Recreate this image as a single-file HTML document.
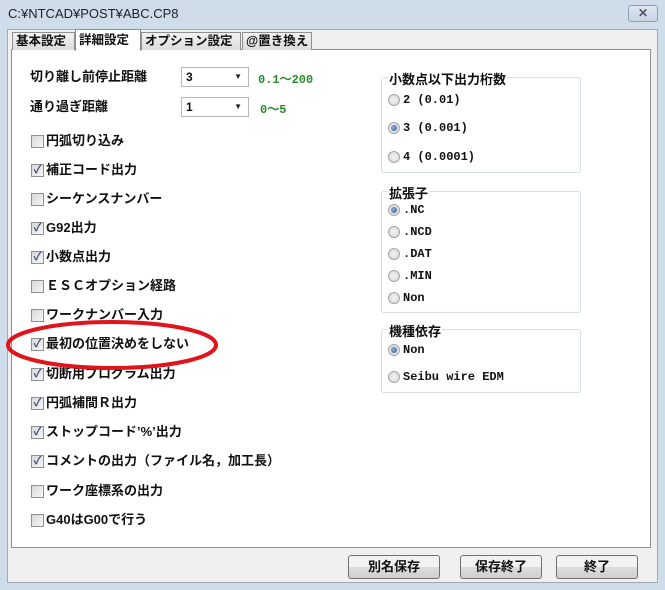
<!DOCTYPE html><html><head><meta charset="utf-8"><style>
*{margin:0;padding:0;box-sizing:border-box}
body{width:665px;height:590px;background:#cfdcea;font-family:"Liberation Sans","Noto Sans CJK JP",sans-serif;position:relative;overflow:hidden;font-size:13px;font-weight:bold;color:#111}
.a{position:absolute}
.title{left:8px;top:6px;font-weight:normal;font-size:13px;color:#222}
.client{left:7px;top:29px;width:651px;height:554px;background:#f0f0f0;border:1px solid #a0aab5}
.pane{left:11px;top:49px;width:640px;height:499px;background:#fff;border:1px solid #8e8f8f}
.tab{top:32px;height:18px;border:1px solid #8e8f8f;border-bottom:none;background:linear-gradient(#f2f2f2,#dcdcdc);font-size:12.5px;line-height:16px;padding:0 3px;white-space:nowrap;overflow:hidden}
.cb{width:13px;height:13px;border:1px solid #8e8f8f;background:linear-gradient(135deg,#d8d8d8,#f6f6f6);font-size:11px;line-height:11px;text-align:center;color:#3a4a78}
.lbl{white-space:nowrap;font-size:13px;line-height:16px}
.m{font-family:"Liberation Mono","Noto Sans CJK JP",monospace;font-size:12px}
.grp{border:1px solid #d5dfe5;border-radius:3px}
.gt{background:#fff;padding:0 1px;font-size:13px}
.rb{width:12px;height:12px;border-radius:50%;border:1px solid #a6a6a6;background:radial-gradient(#f4f4f4,#d4d4d4)}
.rb.on::after{content:"";position:absolute;left:2px;top:2px;width:6px;height:6px;border-radius:50%;background:radial-gradient(circle at 40% 40%,#9ad,#1d5a9a)}
.sel{width:68px;height:20px;border:1px solid #b8b8b8;background:#fff;font-size:12px;padding:2px 4px}
.sel::after{content:"▼";position:absolute;right:6px;top:4px;font-size:8px;color:#222}
.green{color:#2a8a2a;font-family:"Liberation Mono",monospace;font-size:12px}
.btn{top:555px;height:24px;border:1px solid #707070;border-radius:3px;background:linear-gradient(#f2f2f2 50%,#dddddd 51%,#cfcfcf);text-align:center;line-height:22px;font-size:13px}
</style></head><body>
<div class="a title">C:¥NTCAD¥POST¥ABC.CP8</div>
<div class="a" style="left:628px;top:5px;width:30px;height:17px;border:1px solid #8ea0b6;border-radius:3px;background:linear-gradient(#dde6f0,#c6d4e4);text-align:center;font-size:12px;line-height:15px;color:#556">✕</div>
<div class="a client"></div>
<div class="a pane"></div>
<div class="a tab" style="left:12px;width:63px">基本設定</div>
<div class="a tab" style="left:75px;top:29px;height:22px;width:66px;background:#fff;line-height:20px">詳細設定</div>
<div class="a tab" style="left:141px;width:100px">オプション設定</div>
<div class="a tab" style="left:242px;width:70px">@置き換え</div>

<div class="a lbl" style="left:30px;top:69px">切り離し前停止距離</div>
<div class="a sel" style="left:181px;top:67px">3</div>
<div class="a green" style="left:258px;top:70px">0.1～200</div>
<div class="a lbl" style="left:30px;top:99px">通り過ぎ距離</div>
<div class="a sel" style="left:181px;top:97px">1</div>
<div class="a green" style="left:260px;top:100px">0～5</div>

<div class="a cb" style="left:31px;top:135px"></div><div class="a lbl" style="left:46px;top:133px">円弧切り込み</div>
<div class="a cb" style="left:31px;top:164px">✓</div><div class="a lbl" style="left:46px;top:162px">補正コード出力</div>
<div class="a cb" style="left:31px;top:193px"></div><div class="a lbl" style="left:46px;top:191px">シーケンスナンバー</div>
<div class="a cb" style="left:31px;top:222px">✓</div><div class="a lbl" style="left:46px;top:220px">G92出力</div>
<div class="a cb" style="left:31px;top:251px">✓</div><div class="a lbl" style="left:46px;top:249px">小数点出力</div>
<div class="a cb" style="left:31px;top:280px"></div><div class="a lbl" style="left:46px;top:278px">ＥＳＣオプション経路</div>
<div class="a cb" style="left:31px;top:309px"></div><div class="a lbl" style="left:46px;top:307px">ワークナンバー入力</div>
<div class="a cb" style="left:31px;top:338px">✓</div><div class="a lbl" style="left:46px;top:336px">最初の位置決めをしない</div>
<div class="a cb" style="left:31px;top:368px">✓</div><div class="a lbl" style="left:46px;top:366px">切断用プログラム出力</div>
<div class="a cb" style="left:31px;top:397px">✓</div><div class="a lbl" style="left:46px;top:395px">円弧補間Ｒ出力</div>
<div class="a cb" style="left:31px;top:426px">✓</div><div class="a lbl" style="left:46px;top:424px">ストップコード’%’出力</div>
<div class="a cb" style="left:31px;top:455px">✓</div><div class="a lbl" style="left:46px;top:453px">コメントの出力（ファイル名，加工長）</div>
<div class="a cb" style="left:31px;top:485px"></div><div class="a lbl" style="left:46px;top:483px">ワーク座標系の出力</div>
<div class="a cb" style="left:31px;top:514px"></div><div class="a lbl" style="left:46px;top:512px">G40はG00で行う</div>

<svg class="a" style="left:0;top:310px" width="230" height="70"><ellipse cx="112" cy="35" rx="104" ry="23" fill="none" stroke="#e0141c" stroke-width="4"/></svg>

<div class="a grp" style="left:381px;top:77px;width:200px;height:96px"></div>
<div class="a gt" style="left:388px;top:69px">小数点以下出力桁数</div>
<div class="a rb" style="left:388px;top:94px"></div><div class="a lbl m" style="left:403px;top:92px">2 (0.01)</div>
<div class="a rb on" style="left:388px;top:122px"></div><div class="a lbl m" style="left:403px;top:120px">3 (0.001)</div>
<div class="a rb" style="left:388px;top:151px"></div><div class="a lbl m" style="left:403px;top:149px">4 (0.0001)</div>

<div class="a grp" style="left:381px;top:191px;width:200px;height:122px"></div>
<div class="a gt" style="left:388px;top:183px">拡張子</div>
<div class="a rb on" style="left:388px;top:204px"></div><div class="a lbl m" style="left:403px;top:202px">.NC</div>
<div class="a rb" style="left:388px;top:226px"></div><div class="a lbl m" style="left:403px;top:224px">.NCD</div>
<div class="a rb" style="left:388px;top:248px"></div><div class="a lbl m" style="left:403px;top:246px">.DAT</div>
<div class="a rb" style="left:388px;top:270px"></div><div class="a lbl m" style="left:403px;top:268px">.MIN</div>
<div class="a rb" style="left:388px;top:292px"></div><div class="a lbl m" style="left:403px;top:290px">Non</div>

<div class="a grp" style="left:381px;top:329px;width:200px;height:64px"></div>
<div class="a gt" style="left:388px;top:321px">機種依存</div>
<div class="a rb on" style="left:388px;top:344px"></div><div class="a lbl m" style="left:403px;top:342px">Non</div>
<div class="a rb" style="left:388px;top:371px"></div><div class="a lbl m" style="left:403px;top:369px">Seibu wire EDM</div>

<div class="a btn" style="left:348px;width:92px">別名保存</div>
<div class="a btn" style="left:460px;width:82px">保存終了</div>
<div class="a btn" style="left:556px;width:82px">終了</div>
</body></html>
